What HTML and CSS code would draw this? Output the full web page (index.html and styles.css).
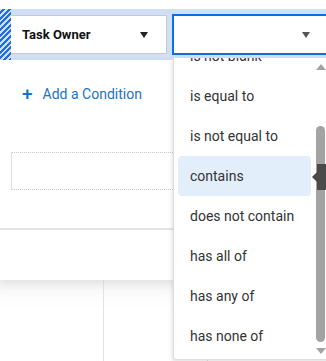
FILE: index.html
```html
<!DOCTYPE html>
<html>
  <head>
    <title>Filter Conditions</title>
    <link rel="stylesheet" href="styles.css">
  </head>
  <body>
    <div class="page">
      <!-- Condition row being edited -->
      <div class="toolbar">
        <div class="hatch"></div>
        <div class="select owner">
          <span>Task Owner</span>
          <span class="caret"></span>
        </div>
        <div class="select op">
          <span></span>
          <span class="caret"></span>
        </div>
      </div>

      <div class="panel">
        <div class="add-row">
          <span class="plus">+</span>
          <span>Add a Condition</span>
        </div>
        <div class="drop-zone"></div>
        <div class="panel-foot"></div>
      </div>

      <div class="lower">
        <div class="col"></div>
        <div class="col"></div>
      </div>

      <!-- Operator menu -->
      <div class="menu">
        <ul class="options">
          <li class="cut">is not blank</li>
          <li>is equal to</li>
          <li>is not equal to</li>
          <li class="active">contains</li>
          <li>does not contain</li>
          <li>has all of</li>
          <li>has any of</li>
          <li>has none of</li>
        </ul>
        <div class="scrollbar">
          <span class="arrow up"></span>
          <span class="thumb"></span>
          <span class="arrow down"></span>
        </div>
      </div>
      <div class="tip"></div>
    </div>
  </body>
</html>
```

FILE: styles.css
```css
:root {
  --blue: #0b6fe3;
  --link: #1a73c8;
  --text: #333;
  --line: #e2e2e2;
}

body {
  margin: 0;
  font-family: Roboto, "Liberation Sans", sans-serif;
  color: var(--text);
  background: white;
}

.page {
  position: relative;
  width: 326px;
  height: 361px;
  overflow: hidden;
}

.toolbar {
  margin-top: 9px;
  height: 51px;
  background: #cfe0f6;
  display: flex;
  align-items: center;
}

.hatch {
  width: 11px;
  height: 100%;
  background: repeating-linear-gradient(
    -45deg,
    #1f6fe0 0,
    #1f6fe0 2px,
    #cfe0f6 2px,
    #cfe0f6 4px
  );
}

.select {
  background: white;
  display: flex;
  align-items: center;
  justify-content: space-between;
  box-sizing: border-box;
}

.owner {
  width: 156px;
  height: 39px;
  border: 1px solid #c9c9c9;
  border-left: none;
  padding: 0 18px 0 11px;
  font-weight: 700;
  font-size: 13px;
  color: #111;
}

.op {
  margin-left: 5px;
  flex: 1;
  height: 41px;
  border: 2px solid var(--blue);
  border-right: none;
  padding: 0 16px 0 10px;
}

.caret {
  width: 0;
  height: 0;
  border-left: 4px solid transparent;
  border-right: 4px solid transparent;
  border-top: 6px solid #222;
}

.op .caret {
  border-top-color: #555;
}

.panel {
  width: 173px;
  height: 220px;
  box-shadow: 0 4px 8px rgba(0, 0, 0, 0.06);
  position: relative;
}

.add-row {
  display: flex;
  align-items: center;
  gap: 10px;
  padding: 25px 0 0 22px;
  font-size: 14px;
  color: var(--link);
}

.plus {
  font-size: 19px;
  font-weight: 500;
  line-height: 18px;
}

.drop-zone {
  margin: 49px 0 0 11px;
  height: 36px;
  border: 1px dotted #c8c8c8;
  border-left: 1px solid #e0e0e0;
  border-right: none;
}

.panel-foot {
  margin-top: 38px;
  border-top: 2px solid var(--line);
}

.lower {
  display: flex;
  height: 81px;
  background: linear-gradient(#f1f1f1, #fcfcfc 16px, #fff 30px);
}

.col {
  width: 103px;
  border-right: 1px solid var(--line);
}

.menu {
  position: absolute;
  left: 173px;
  top: 58px;
  width: 160px;
  height: 301px;
  background: white;
  border-left: 1px solid #ddd;
  border-bottom: 1px solid #ddd;
  border-radius: 0 0 0 3px;
  box-shadow: -1px 2px 4px rgba(0, 0, 0, 0.12);
  overflow: hidden;
}

.options {
  list-style: none;
  margin: -22px 0 0;
  padding: 0 0 0 4px;
  font-size: 14px;
}

.options li {
  width: 133px;
  height: 40px;
  line-height: 40px;
  padding-left: 12px;
  box-sizing: border-box;
  border-radius: 4px;
}

.options .active {
  background: #e3eefb;
}

.scrollbar {
  position: absolute;
  left: 142px;
  top: 6px;
  width: 9px;
  bottom: 4px;
  display: flex;
  flex-direction: column;
  align-items: center;
}

.arrow {
  width: 0;
  height: 0;
  border-left: 5px solid transparent;
  border-right: 5px solid transparent;
}

.arrow.up {
  border-bottom: 6px solid #a3a3a3;
}

.arrow.down {
  border-top: 6px solid #a3a3a3;
  margin-top: 6px;
}

.thumb {
  margin-top: 56px;
  width: 9px;
  height: 216px;
  background: #a3a3a3;
  border-radius: 5px;
}

.tip {
  position: absolute;
  left: 317px;
  top: 164px;
  width: 9px;
  height: 26px;
  background: #4a4a4a;
}

.tip::before {
  content: "";
  position: absolute;
  left: -5px;
  top: 8px;
  border-top: 5px solid transparent;
  border-bottom: 5px solid transparent;
  border-right: 5px solid #4a4a4a;
}
```
